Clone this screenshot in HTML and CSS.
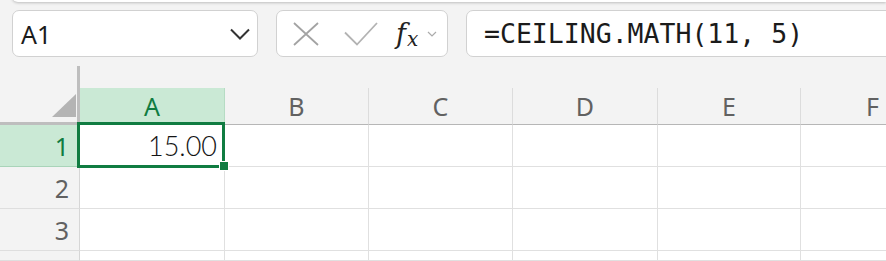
FILE: index.html
```html
<!DOCTYPE html>
<html lang="en">
<head>
  <meta charset="UTF-8" />
  <title>Book1 - Excel</title>
  <link rel="stylesheet" href="styles.css">
</head>
<body>

  <div class="ribbon"></div>

  <div class="formula-bar">
    <div class="name-box">
      <span>A1</span>
      <svg class="chev" width="20" height="12" viewBox="0 0 20 12">
        <polyline points="1,1.5 10,10.5 19,1.5" fill="none" stroke="#333" stroke-width="2"/>
      </svg>
    </div>

    <div class="fx-box">
      <svg class="ico-x" width="26" height="24" viewBox="0 0 26 24">
        <path d="M1 1 L25 23 M25 1 L1 23" stroke="#a3a3a3" stroke-width="1.8" fill="none"/>
      </svg>
      <svg class="ico-check" width="34" height="24" viewBox="0 0 34 24">
        <polyline points="1,10.5 13,22.5 33,1" fill="none" stroke="#b3b3b3" stroke-width="1.8"/>
      </svg>
      <span class="fx"><i>f</i><i class="sub">x</i></span>
      <svg class="chev-sm" width="10" height="6" viewBox="0 0 10 6">
        <polyline points="1,1 5,5 9,1" fill="none" stroke="#ababab" stroke-width="1.2"/>
      </svg>
    </div>

    <div class="formula">=CEILING.MATH(11, 5)</div>
  </div>

  <div class="corner-top"></div>

  <div class="sheet">
    <div class="corner"><span class="tri"></span></div>
    <div class="col-head active">A</div>
    <div class="col-head">B</div>
    <div class="col-head">C</div>
    <div class="col-head">D</div>
    <div class="col-head">E</div>
    <div class="col-head">F</div>

    <div class="row-head active">1</div>
    <div class="cell num">15.00<div class="sel"><span class="handle"></span></div></div>
    <div class="cell"></div>
    <div class="cell"></div>
    <div class="cell"></div>
    <div class="cell"></div>
    <div class="cell"></div>

    <div class="row-head">2</div>
    <div class="cell"></div>
    <div class="cell"></div>
    <div class="cell"></div>
    <div class="cell"></div>
    <div class="cell"></div>
    <div class="cell"></div>

    <div class="row-head">3</div>
    <div class="cell"></div>
    <div class="cell"></div>
    <div class="cell"></div>
    <div class="cell"></div>
    <div class="cell"></div>
    <div class="cell"></div>

    <!-- row 4 is below the fold, only its top edge shows -->
    <div class="row-head"></div>
    <div class="cell"></div>
    <div class="cell"></div>
    <div class="cell"></div>
    <div class="cell"></div>
    <div class="cell"></div>
    <div class="cell"></div>
  </div>

</body>
</html>
```

FILE: styles.css
```css
body {
  margin: 0;
  background: #f3f3f3;
  font-family: "Noto Sans", "Open Sans", sans-serif;
  overflow: hidden;
  width: 886px;
  height: 261px;
}

.ribbon {
  height: 12px;
  margin: -10px 0 0 12px;
  background: #fff;
  border-radius: 9px 0 0 9px;
  box-shadow: 0 1px 3px rgba(0,0,0,0.22);
}

.formula-bar {
  display: flex;
  gap: 18px;
  margin-top: 8px;
  padding-left: 12px;
  overflow: hidden;
}

.name-box,
.fx-box,
.formula {
  box-sizing: border-box;
  height: 47px;
  background: #fff;
  border: 1px solid #d1d1d1;
  border-radius: 7px;
  display: flex;
  align-items: center;
  flex-shrink: 0;
}

.name-box {
  width: 246px;
  padding: 0 7px 0 8px;
  justify-content: space-between;
  font-size: 25px;
  color: #1b1b1b;
}

.fx-box {
  width: 172px;
  padding-left: 16px;
}

.ico-check { margin-left: 25px; }

.fx {
  margin-left: 18px;
  font-family: "DejaVu Serif", serif;
  color: #222;
  line-height: 1;
  display: flex;
  align-items: baseline;
}

.fx i { font-size: 27px; }

.fx .sub {
  font-size: 20px;
  position: relative;
  top: 3px;
  margin-left: 1px;
}

.chev-sm { margin-left: 9px; }

.formula {
  width: 460px;
  padding-left: 17px;
  font-family: "DejaVu Sans Mono", monospace;
  font-size: 26.5px;
  color: #1b1b1b;
  white-space: nowrap;
}

/* grid */

.corner-top {
  box-sizing: border-box;
  width: 80px;
  height: 22px;
  margin-top: 9px;
  border-right: 3px solid #bebebe;
}

.sheet {
  display: grid;
  grid-template-columns: 80px 145px 144px 144px 145px 143px 144px;
  grid-template-rows: 37px repeat(3, 42px) 10px;
  overflow: hidden;
}

.corner {
  border-right: 3px solid #bebebe;
  border-bottom: 3px solid #bebebe;
  display: flex;
  justify-content: flex-end;
  align-items: flex-end;
  padding: 0 1px 5px 0;
}

.tri {
  width: 24px;
  height: 23px;
  background: #b4b4b4;
  clip-path: polygon(100% 0, 100% 100%, 0 100%);
}

.col-head {
  box-sizing: border-box;
  border-right: 1px solid #dcdcdc;
  border-bottom: 1px solid #b6b6b6;
  display: flex;
  justify-content: center;
  align-items: center;
  font-size: 25px;
  color: #616161;
}

.col-head.active {
  background: #cae9d5;
  color: #107c41;
  border-bottom: 3px solid #107c41;
  border-right-color: #b6dcc4;
  padding-top: 2px;
}

.row-head {
  box-sizing: border-box;
  border-right: 1px solid #d6d6d6;
  border-bottom: 1px solid #dedede;
  display: flex;
  justify-content: flex-end;
  align-items: center;
  padding-right: 10px;
  font-size: 25px;
  color: #616161;
}

.row-head.active {
  background: #cae9d5;
  color: #107c41;
  border-bottom-color: #a9d4b9;
}

.cell {
  box-sizing: border-box;
  background: #fff;
  border-right: 1px solid #e0e0e0;
  border-bottom: 1px solid #e0e0e0;
}

.cell.num {
  position: relative;
  display: flex;
  justify-content: flex-end;
  align-items: center;
  padding-right: 7px;
  font-family: Lato, Roboto, sans-serif;
  font-weight: 300;
  font-size: 27px;
  color: #141414;
}

.sel {
  position: absolute;
  left: -3px;
  top: -3px;
  right: -1px;
  bottom: -2px;
  border: 3px solid #107c41;
}

.handle {
  position: absolute;
  right: -7px;
  bottom: -6px;
  width: 8px;
  height: 8px;
  background: #107c41;
  border: 1px solid #fff;
}
```
